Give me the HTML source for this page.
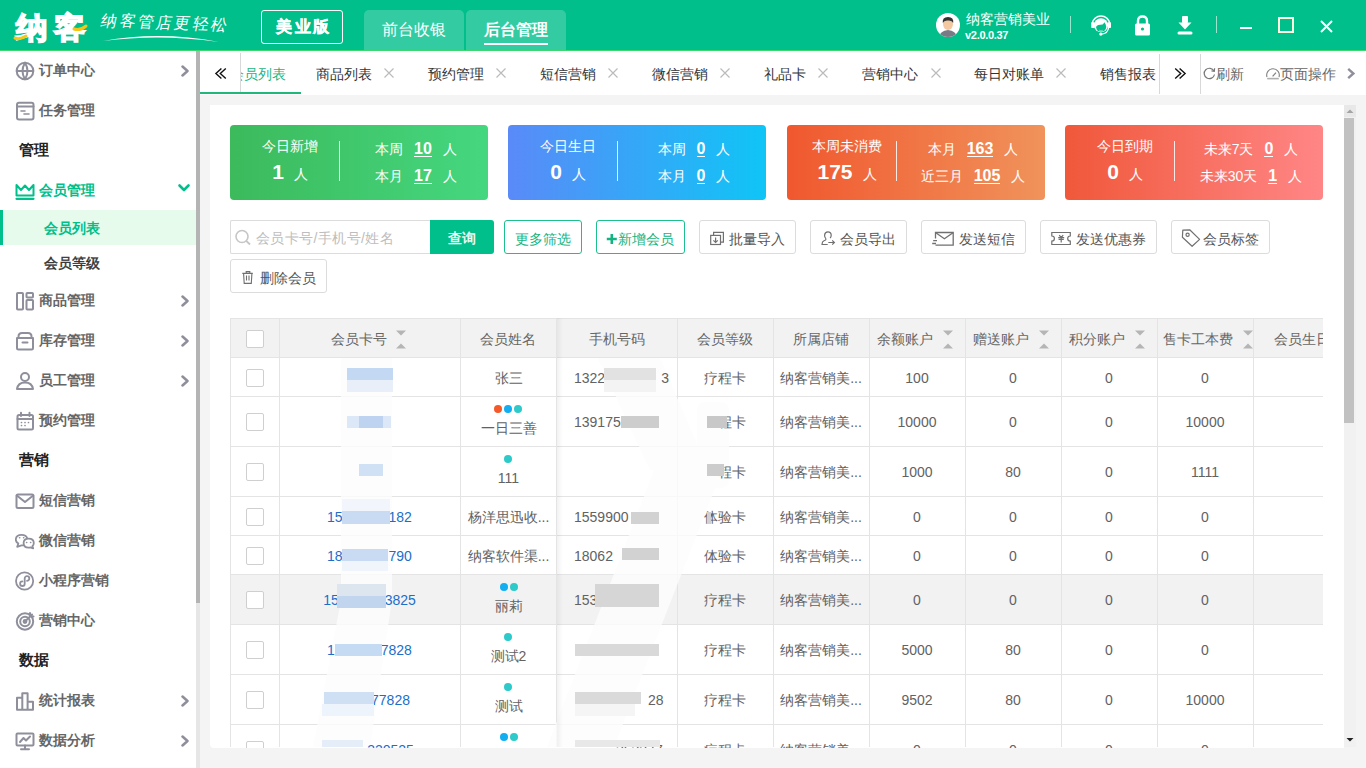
<!DOCTYPE html>
<html><head><meta charset="utf-8">
<style>
*{box-sizing:border-box;margin:0;padding:0}
html,body{width:1366px;height:768px;overflow:hidden;background:#f4f4f4;font-family:"Liberation Sans",sans-serif;position:relative}
.a{position:absolute}
#hdr{left:0;top:0;width:1366px;height:50px;background:#00bf8b}
#hdrline{left:0;top:50px;width:1366px;height:1px;background:#3fd870}
#side{left:0;top:51px;width:196px;height:717px;background:#fff}
#sbtrack{left:196px;top:51px;width:4px;height:717px;background:#e6e6e6}
#sbthumb{left:196px;top:51px;width:4px;height:552px;background:#b4b4b4}
.mi{position:absolute;left:39px;font-size:14px;line-height:20px;font-weight:bold;color:#666;white-space:nowrap}
.mh{position:absolute;left:19px;font-size:15px;line-height:20px;font-weight:bold;color:#222}
.ic{position:absolute;left:15px;width:20px;height:20px}
.chev{position:absolute;left:178px;width:12px;height:12px}
#tabs{left:200px;top:51px;width:1166px;height:44px;background:#fff}
.tab{position:absolute;top:64px;font-size:14px;line-height:20px;color:#333;white-space:nowrap}
.x{position:absolute;top:68px;width:10px;height:10px}
#panel{left:210px;top:105px;width:1134px;height:643px;background:#fff;overflow:hidden;border-radius:0 0 0 4px}
.card{position:absolute;top:125px;width:258px;height:75px;border-radius:4px;color:#fff}
.btn{position:absolute;top:220px;height:34px;border:1px solid #dcdcdc;border-radius:3px;background:#fff;font-size:14px;color:#555;white-space:nowrap}
.btn span{position:absolute;top:8px;line-height:20px}
</style></head>
<body>
<!-- HEADER -->
<div id="hdr" class="a"></div>
<div id="hdrline" class="a"></div>
<div class="a" style="left:16px;top:8px;font-size:32px;line-height:40px;font-weight:900;color:#fff;letter-spacing:6px;-webkit-text-stroke:1.6px #fff;transform:scaleY(0.95)">纳客</div>
<svg class="a" style="left:0;top:0" width="240" height="50">
<path d="M15 38 Q20 40 26 36" stroke="#f5c518" stroke-width="3" fill="none" stroke-linecap="round"/>
<path d="M74 29 Q80 31 86 26" stroke="#f5c518" stroke-width="3" fill="none" stroke-linecap="round"/>
<path d="M103 41 Q160 30.6 219 42 Q160 33.4 103 41Z" fill="#fff"/>
</svg>
<div class="a" style="left:101px;top:13px;font-size:16px;line-height:20px;color:#fff;font-family:'Liberation Serif',serif;letter-spacing:2.4px;transform:skewX(-10deg) rotate(2deg)">纳客管店更轻松</div>
<div class="a" style="left:261px;top:10px;width:82px;height:34px;border:1.5px solid #fff;border-radius:3px"></div>
<div class="a" style="left:276px;top:16px;font-size:16px;line-height:22px;font-weight:bold;color:#fff;letter-spacing:2.5px;-webkit-text-stroke:0.4px #fff">美业版</div>
<div class="a" style="left:364px;top:10px;width:100px;height:40px;background:rgba(255,255,255,0.2);border-radius:5px 5px 0 0"></div>
<div class="a" style="left:466px;top:10px;width:100px;height:40px;background:rgba(255,255,255,0.2);border-radius:5px 5px 0 0"></div>
<div class="a" style="left:382px;top:19px;font-size:16px;line-height:22px;color:#fff">前台收银</div>
<div class="a" style="left:484px;top:19px;font-size:16px;line-height:22px;color:#fff;font-weight:bold">后台管理</div>
<div class="a" style="left:484px;top:43px;width:64px;height:2px;background:#fff"></div>
<!-- avatar -->
<svg class="a" style="left:936px;top:13px" width="24" height="24" viewBox="0 0 24 24">
<circle cx="12" cy="12" r="12" fill="#fff"/>
<clipPath id="cav"><circle cx="12" cy="12" r="12"/></clipPath>
<g clip-path="url(#cav)">
<path d="M3 24 Q4 18 12 17 Q20 18 21 24Z" fill="#7a7a86"/>
<ellipse cx="12" cy="11" rx="5" ry="6" fill="#f3c7a0"/>
<path d="M6.8 10 Q6 4 12 4 Q18 4 17.2 10 Q16 7 12 7.5 Q8 7 6.8 10Z" fill="#333"/>
</g>
</svg>
<div class="a" style="left:966px;top:9px;font-size:14px;line-height:20px;color:#fff">纳客营销美业</div>
<div class="a" style="left:965px;top:28px;font-size:11px;line-height:14px;color:#fff;font-weight:bold;letter-spacing:-0.3px">v2.0.0.37</div>
<div class="a" style="left:1070px;top:16px;width:1px;height:17px;background:rgba(255,255,255,0.6)"></div>
<div class="a" style="left:1216px;top:16px;width:1px;height:17px;background:rgba(255,255,255,0.6)"></div>
<!-- headset -->
<svg class="a" style="left:1090px;top:13px" width="22" height="24" viewBox="0 0 22 24">
<path d="M2.2 10.5 A8.9 8.9 0 0 1 19.8 10.5" stroke="#fff" stroke-width="1.5" fill="none"/>
<rect x="1.2" y="9.2" width="3.6" height="5.8" rx="0.8" fill="#fff"/>
<rect x="17.6" y="9.2" width="3.4" height="5.8" rx="0.8" fill="#fff"/>
<circle cx="11" cy="12.3" r="7" fill="#fff"/>
<path d="M6 14 Q7.5 11.6 12.6 11.6 Q13.8 10.6 14.3 9.2 Q15.8 10.8 16.2 13.5 Q16.3 16.8 13.5 18.2 Q11 19 8.5 18.2 Q6.2 17 6 14Z" fill="#00bf8b"/>
<path d="M9 17.2 Q11 18 13 17.2" stroke="#7fdcc0" stroke-width="0.8" fill="none"/>
<path d="M18.6 14.5 Q18 20.5 11.5 21.2" stroke="#fff" stroke-width="1.3" fill="none"/>
<circle cx="10.8" cy="21.1" r="1.6" fill="#fff"/>
</svg>
<!-- lock -->
<svg class="a" style="left:1134px;top:15px" width="17" height="21" viewBox="0 0 17 21">
<path d="M4 9 V6 Q4 1.5 8.5 1.5 Q13 1.5 13 6 V9" stroke="#fff" stroke-width="2.4" fill="none"/>
<rect x="1" y="8.5" width="15" height="12" rx="1.5" fill="#fff"/>
<circle cx="8.5" cy="14" r="1.6" fill="#00bf8b"/>
</svg>
<!-- download -->
<svg class="a" style="left:1177px;top:15px" width="16" height="20" viewBox="0 0 16 20">
<rect x="5" y="1" width="6" height="7" rx="1" fill="#fff"/>
<path d="M1.5 7.5 H14.5 L8 14.5Z" fill="#fff"/>
<rect x="0.5" y="16.5" width="15" height="3" rx="1.5" fill="#fff"/>
</svg>
<div class="a" style="left:1240px;top:27px;width:12px;height:2px;background:#fff"></div>
<div class="a" style="left:1278px;top:17px;width:16px;height:16px;border:2px solid #fbffe0"></div>
<svg class="a" style="left:1320px;top:20px" width="13" height="13" viewBox="0 0 13 13">
<path d="M1 1 L12 12 M12 1 L1 12" stroke="#fff" stroke-width="2"/>
</svg>

<!-- SIDEBAR -->
<div id="side" class="a"></div>
<div class="a" style="left:0;top:210px;width:196px;height:35px;background:#e6fbec"></div>
<div class="a" style="left:0;top:210px;width:3px;height:35px;background:#00bf8b"></div>
<div class="mi" style="top:60px;left:39px;color:#666">订单中心</div>
<svg class="a" style="left:15px;top:61px" width="20" height="20" viewBox="0 0 20 20" fill="none" stroke="#8e8f9b" stroke-width="2" stroke-linecap="round" stroke-linejoin="round"><circle cx="10" cy="10" r="8.3"/><path d="M1.8 10 H18.2"/><path d="M10 1.7 Q5 10 10 18.3 Q15 10 10 1.7"/></svg>
<svg class="a" style="left:180px;top:65px" width="10" height="12" viewBox="0 0 10 12"><path d="M2.5 1.5 L7.5 6 L2.5 10.5" stroke="#8e8f9b" stroke-width="2.5" fill="none" stroke-linecap="round" stroke-linejoin="round"/></svg>
<div class="mi" style="top:100px;left:39px;color:#666">任务管理</div>
<svg class="a" style="left:15px;top:101px" width="20" height="20" viewBox="0 0 20 20" fill="none" stroke="#8e8f9b" stroke-width="2" stroke-linecap="round" stroke-linejoin="round"><rect x="2" y="1.8" width="16.5" height="16.8" rx="2"/><path d="M2 5.5 H18.5"/><path d="M6 10 H10 M9 13 H14" stroke-width="1.6"/></svg>
<div class="mh" style="top:140px">管理</div>
<div class="mi" style="top:180px;left:39px;color:#00bf8b">会员管理</div>
<svg class="a" style="left:15px;top:181px" width="20" height="20" viewBox="0 0 20 20" fill="none" stroke="#00bf8b" stroke-width="2" stroke-linecap="round" stroke-linejoin="round"><path d="M1.5 14.5 V4 L6 9 L10 4.5 L14 9 L18.5 4 V14.5Z" stroke-width="2"/><path d="M1.5 17.8 H18.5" stroke-width="2.2"/></svg>
<svg class="a" style="left:177px;top:183px" width="14" height="10" viewBox="0 0 14 10"><path d="M2.5 2.5 L7 7 L11.5 2.5" stroke="#00bf8b" stroke-width="2.6" fill="none" stroke-linecap="round" stroke-linejoin="round"/></svg>
<div class="mi" style="top:218px;left:44px;color:#00bf8b">会员列表</div>
<div class="mi" style="top:253px;left:44px;color:#333;font-weight:normal;-webkit-text-stroke:0.45px #333">会员等级</div>
<div class="mi" style="top:290px;left:39px;color:#666">商品管理</div>
<svg class="a" style="left:15px;top:291px" width="20" height="20" viewBox="0 0 20 20" fill="none" stroke="#8e8f9b" stroke-width="2" stroke-linecap="round" stroke-linejoin="round"><rect x="2" y="2" width="6" height="16.5" rx="0.8"/><rect x="11.5" y="2" width="6.5" height="4.5" rx="0.8"/><rect x="11.5" y="9" width="6.5" height="9.5" rx="0.8"/></svg>
<svg class="a" style="left:180px;top:295px" width="10" height="12" viewBox="0 0 10 12"><path d="M2.5 1.5 L7.5 6 L2.5 10.5" stroke="#8e8f9b" stroke-width="2.5" fill="none" stroke-linecap="round" stroke-linejoin="round"/></svg>
<div class="mi" style="top:330px;left:39px;color:#666">库存管理</div>
<svg class="a" style="left:15px;top:331px" width="20" height="20" viewBox="0 0 20 20" fill="none" stroke="#8e8f9b" stroke-width="2" stroke-linecap="round" stroke-linejoin="round"><path d="M3.5 5.5 Q3.5 2 7 2 H13 Q16.5 2 16.5 5.5"/><path d="M2 7 H18 V17 Q18 18.5 16.5 18.5 H3.5 Q2 18.5 2 17Z"/><path d="M7.5 11.5 H12.5"/></svg>
<svg class="a" style="left:180px;top:335px" width="10" height="12" viewBox="0 0 10 12"><path d="M2.5 1.5 L7.5 6 L2.5 10.5" stroke="#8e8f9b" stroke-width="2.5" fill="none" stroke-linecap="round" stroke-linejoin="round"/></svg>
<div class="mi" style="top:370px;left:39px;color:#666">员工管理</div>
<svg class="a" style="left:15px;top:371px" width="20" height="20" viewBox="0 0 20 20" fill="none" stroke="#8e8f9b" stroke-width="2" stroke-linecap="round" stroke-linejoin="round"><circle cx="10" cy="6" r="4"/><path d="M2 18 Q3 11.5 10 11.5 Q17 11.5 18 18Z"/></svg>
<svg class="a" style="left:180px;top:375px" width="10" height="12" viewBox="0 0 10 12"><path d="M2.5 1.5 L7.5 6 L2.5 10.5" stroke="#8e8f9b" stroke-width="2.5" fill="none" stroke-linecap="round" stroke-linejoin="round"/></svg>
<div class="mi" style="top:410px;left:39px;color:#666">预约管理</div>
<svg class="a" style="left:15px;top:411px" width="20" height="20" viewBox="0 0 20 20" fill="none" stroke="#8e8f9b" stroke-width="2" stroke-linecap="round" stroke-linejoin="round"><rect x="2.5" y="4" width="15.5" height="14.5" rx="1.5"/><path d="M2.5 8 H18 M6 1.8 V5 M14.5 1.8 V5"/><path d="M6.5 11.5h.01M10 11.5h.01M13.5 11.5h.01M6.5 14.5h.01M10 14.5h.01" stroke-width="1.7"/></svg>
<div class="mh" style="top:450px">营销</div>
<div class="mi" style="top:490px;left:39px;color:#666">短信营销</div>
<svg class="a" style="left:15px;top:491px" width="20" height="20" viewBox="0 0 20 20" fill="none" stroke="#8e8f9b" stroke-width="2" stroke-linecap="round" stroke-linejoin="round"><rect x="1.5" y="3.5" width="17" height="13.5" rx="1.5"/><path d="M1.8 4.5 L10 11 L18.2 4.5"/></svg>
<div class="mi" style="top:530px;left:39px;color:#666">微信营销</div>
<svg class="a" style="left:15px;top:531px" width="20" height="20" viewBox="0 0 20 20" fill="none" stroke="#8e8f9b" stroke-width="1.8" stroke-linecap="round" stroke-linejoin="round"><path d="M9 14.2 Q7.8 14.6 6.5 14.4 L2.2 15.8 L3.3 12.6 Q0.8 10.8 0.8 8.8 Q0.8 3.8 6.5 3.8 Q11.2 3.8 12.2 7.2"/><path d="M13.6 7.6 Q18.8 7.6 18.8 12 Q18.8 14 17.4 15.2 L18.2 17.4 L15.4 16.4 Q14.5 16.6 13.6 16.6 Q8.6 16.6 8.6 12 Q8.6 7.6 13.6 7.6Z" fill="#fff"/><path d="M4.5 6.8h.3M8.5 6.8h.3M11.5 11.5h.3M15.5 11.5h.3" stroke-width="1.4"/></svg>
<div class="mi" style="top:570px;left:39px;color:#666">小程序营销</div>
<svg class="a" style="left:15px;top:571px" width="20" height="20" viewBox="0 0 20 20" fill="none" stroke="#8e8f9b" stroke-width="1.8" stroke-linecap="round" stroke-linejoin="round"><circle cx="9.6" cy="10" r="8.6"/><path d="M7.4 10.4 A2.3 2.3 0 1 0 9.7 12.7 V7.5 A2.3 2.3 0 1 1 12 9.8"/></svg>
<div class="mi" style="top:610px;left:39px;color:#666">营销中心</div>
<svg class="a" style="left:15px;top:611px" width="20" height="20" viewBox="0 0 20 20" fill="none" stroke="#8e8f9b" stroke-width="2" stroke-linecap="round" stroke-linejoin="round"><circle cx="10" cy="10.5" r="8.2"/><circle cx="10" cy="10.5" r="4.8"/><circle cx="10" cy="10.5" r="1.4"/><path d="M10 10.5 L17 3.5 M15 2 V5.5 H18.5"/></svg>
<div class="mh" style="top:650px">数据</div>
<div class="mi" style="top:690px;left:39px;color:#666">统计报表</div>
<svg class="a" style="left:15px;top:691px" width="20" height="20" viewBox="0 0 20 20" fill="none" stroke="#8e8f9b" stroke-width="2" stroke-linecap="round" stroke-linejoin="round"><path d="M2 18.8 V6.8 H7.3 V18.8Z M7.3 18.8 V2.2 H12.6 V18.8Z M12.6 18.8 V10.8 H18 V18.8Z"/></svg>
<svg class="a" style="left:180px;top:695px" width="10" height="12" viewBox="0 0 10 12"><path d="M2.5 1.5 L7.5 6 L2.5 10.5" stroke="#8e8f9b" stroke-width="2.5" fill="none" stroke-linecap="round" stroke-linejoin="round"/></svg>
<div class="mi" style="top:730px;left:39px;color:#666">数据分析</div>
<svg class="a" style="left:15px;top:731px" width="20" height="20" viewBox="0 0 20 20" fill="none" stroke="#8e8f9b" stroke-width="2" stroke-linecap="round" stroke-linejoin="round"><rect x="1.5" y="2.5" width="17" height="12" rx="1"/><path d="M5 11 L8.5 7 L11 9.5 L15 5.5 M10 14.5 V18 M6 18.3 H14"/></svg>
<svg class="a" style="left:180px;top:735px" width="10" height="12" viewBox="0 0 10 12"><path d="M2.5 1.5 L7.5 6 L2.5 10.5" stroke="#8e8f9b" stroke-width="2.5" fill="none" stroke-linecap="round" stroke-linejoin="round"/></svg>
<div id="sbtrack" class="a"></div>
<div id="sbthumb" class="a"></div>

<!-- TABS -->
<div id="tabs" class="a"></div>
<div class="a" style="left:200px;top:92px;width:101px;height:2px;background:#1fb87a"></div>
<div class="tab" style="left:230px;color:#1db583">会员列表</div>
<div class="a" style="left:200px;top:53px;width:41px;height:39px;background:#fff;border-right:1px solid #d8d8d8"></div>
<svg class="a" style="left:200px;top:60px" width="40" height="30" viewBox="0 0 40 30"><path d="M21.4 8.4 L15.9 13.5 L21.4 18.4 M25.8 8.4 L20.3 13.5 L25.8 18.4" stroke="#111" stroke-width="1.4" fill="none"/></svg>
<div class="tab" style="left:316px">商品列表</div>
<svg class="a" style="left:384px;top:68px" width="10" height="10" viewBox="0 0 10 10"><path d="M0.5 0.5 L9.5 9.5 M9.5 0.5 L0.5 9.5" stroke="#bbb" stroke-width="1.2"/></svg>
<div class="tab" style="left:428px">预约管理</div>
<svg class="a" style="left:496px;top:68px" width="10" height="10" viewBox="0 0 10 10"><path d="M0.5 0.5 L9.5 9.5 M9.5 0.5 L0.5 9.5" stroke="#bbb" stroke-width="1.2"/></svg>
<div class="tab" style="left:540px">短信营销</div>
<svg class="a" style="left:608px;top:68px" width="10" height="10" viewBox="0 0 10 10"><path d="M0.5 0.5 L9.5 9.5 M9.5 0.5 L0.5 9.5" stroke="#bbb" stroke-width="1.2"/></svg>
<div class="tab" style="left:652px">微信营销</div>
<svg class="a" style="left:720px;top:68px" width="10" height="10" viewBox="0 0 10 10"><path d="M0.5 0.5 L9.5 9.5 M9.5 0.5 L0.5 9.5" stroke="#bbb" stroke-width="1.2"/></svg>
<div class="tab" style="left:764px">礼品卡</div>
<svg class="a" style="left:818px;top:68px" width="10" height="10" viewBox="0 0 10 10"><path d="M0.5 0.5 L9.5 9.5 M9.5 0.5 L0.5 9.5" stroke="#bbb" stroke-width="1.2"/></svg>
<div class="tab" style="left:862px">营销中心</div>
<svg class="a" style="left:931px;top:68px" width="10" height="10" viewBox="0 0 10 10"><path d="M0.5 0.5 L9.5 9.5 M9.5 0.5 L0.5 9.5" stroke="#bbb" stroke-width="1.2"/></svg>
<div class="tab" style="left:974px">每日对账单</div>
<svg class="a" style="left:1056px;top:68px" width="10" height="10" viewBox="0 0 10 10"><path d="M0.5 0.5 L9.5 9.5 M9.5 0.5 L0.5 9.5" stroke="#bbb" stroke-width="1.2"/></svg>
<div class="tab" style="left:1100px">销售报表</div>
<div class="a" style="left:1160px;top:51px;width:206px;height:43px;background:#fff"></div>
<div class="a" style="left:1159px;top:54px;width:1px;height:40px;background:#d8d8d8"></div>
<div class="a" style="left:1200px;top:54px;width:1px;height:40px;background:#d8d8d8"></div>
<svg class="a" style="left:1160px;top:60px" width="40" height="30" viewBox="0 0 40 30"><path d="M15.2 8.4 L20.7 13.5 L15.2 18.4 M19.6 8.4 L25.1 13.5 L19.6 18.4" stroke="#111" stroke-width="1.4" fill="none"/></svg>
<svg class="a" style="left:1203px;top:67px" width="13" height="13" viewBox="0 0 13 13"><path d="M11 4 A5.2 5.2 0 1 0 11.5 7.5" stroke="#777" stroke-width="1.2" fill="none"/><path d="M8.5 3.8 L11.3 4.3 L11.6 1.3" stroke="#777" stroke-width="1.2" fill="none"/></svg>
<div class="tab" style="left:1216px;color:#666">刷新</div>
<svg class="a" style="left:1266px;top:66px" width="14" height="15" viewBox="0 0 14 15"><path d="M1.03 11 A6.3 6.3 0 1 1 12.97 11" stroke="#808080" stroke-width="1.1" fill="none"/><path d="M1.2 12.6 H12.8" stroke="#b0b0b0" stroke-width="1.6"/><path d="M6.6 10.4 L10 6.6" stroke="#808080" stroke-width="1.2"/></svg>
<div class="tab" style="left:1280px;color:#666">页面操作</div>
<svg class="a" style="left:1346px;top:67px" width="10" height="13" viewBox="0 0 10 13"><path d="M2.2 1.8 L7.4 6.5 L2.2 11.2" stroke="#8e8f9b" stroke-width="2.4" fill="none"/></svg>

<!-- PANEL -->
<div id="panel" class="a"></div>
<div class="card" style="left:230px;background:linear-gradient(90deg,#3cba5c,#45d77f)"></div>
<div class="a" style="left:230px;top:136px;width:120px;text-align:center;font-size:14px;line-height:20px;color:#fff">今日新增</div>
<div class="a" style="left:230px;top:160px;width:120px;text-align:center;color:#fff;white-space:nowrap"><span style="font-size:21px;line-height:24px;font-weight:bold">1</span><span style="font-size:14px;margin-left:10px">人</span></div>
<div class="a" style="left:339px;top:141px;width:1px;height:40px;background:rgba(255,255,255,0.85)"></div>
<div class="a" style="left:342px;top:139px;width:148px;text-align:center;color:#fff;white-space:nowrap;font-size:14px;line-height:20px">本周<span style="display:inline-block;margin:0 11px 0 11px;font-weight:bold;font-size:16px;border-bottom:1px solid #fff;line-height:15px">10</span>人</div>
<div class="a" style="left:342px;top:166px;width:148px;text-align:center;color:#fff;white-space:nowrap;font-size:14px;line-height:20px">本月<span style="display:inline-block;margin:0 11px 0 11px;font-weight:bold;font-size:16px;border-bottom:1px solid #fff;line-height:15px">17</span>人</div>
<div class="card" style="left:508px;background:linear-gradient(90deg,#5a8af8,#0fc5f6)"></div>
<div class="a" style="left:508px;top:136px;width:120px;text-align:center;font-size:14px;line-height:20px;color:#fff">今日生日</div>
<div class="a" style="left:508px;top:160px;width:120px;text-align:center;color:#fff;white-space:nowrap"><span style="font-size:21px;line-height:24px;font-weight:bold">0</span><span style="font-size:14px;margin-left:10px">人</span></div>
<div class="a" style="left:617px;top:141px;width:1px;height:40px;background:rgba(255,255,255,0.85)"></div>
<div class="a" style="left:620px;top:139px;width:148px;text-align:center;color:#fff;white-space:nowrap;font-size:14px;line-height:20px">本周<span style="display:inline-block;margin:0 11px 0 11px;font-weight:bold;font-size:16px;border-bottom:1px solid #fff;line-height:15px">0</span>人</div>
<div class="a" style="left:620px;top:166px;width:148px;text-align:center;color:#fff;white-space:nowrap;font-size:14px;line-height:20px">本月<span style="display:inline-block;margin:0 11px 0 11px;font-weight:bold;font-size:16px;border-bottom:1px solid #fff;line-height:15px">0</span>人</div>
<div class="card" style="left:787px;background:linear-gradient(90deg,#f0582f,#f0935b)"></div>
<div class="a" style="left:787px;top:136px;width:120px;text-align:center;font-size:14px;line-height:20px;color:#fff">本周未消费</div>
<div class="a" style="left:787px;top:160px;width:120px;text-align:center;color:#fff;white-space:nowrap"><span style="font-size:21px;line-height:24px;font-weight:bold">175</span><span style="font-size:14px;margin-left:10px">人</span></div>
<div class="a" style="left:896px;top:141px;width:1px;height:40px;background:rgba(255,255,255,0.85)"></div>
<div class="a" style="left:899px;top:139px;width:148px;text-align:center;color:#fff;white-space:nowrap;font-size:14px;line-height:20px">本月<span style="display:inline-block;margin:0 11px 0 11px;font-weight:bold;font-size:16px;border-bottom:1px solid #fff;line-height:15px">163</span>人</div>
<div class="a" style="left:899px;top:166px;width:148px;text-align:center;color:#fff;white-space:nowrap;font-size:14px;line-height:20px">近三月<span style="display:inline-block;margin:0 11px 0 11px;font-weight:bold;font-size:16px;border-bottom:1px solid #fff;line-height:15px">105</span>人</div>
<div class="card" style="left:1065px;background:linear-gradient(90deg,#f0583a,#ff8686)"></div>
<div class="a" style="left:1065px;top:136px;width:120px;text-align:center;font-size:14px;line-height:20px;color:#fff">今日到期</div>
<div class="a" style="left:1065px;top:160px;width:120px;text-align:center;color:#fff;white-space:nowrap"><span style="font-size:21px;line-height:24px;font-weight:bold">0</span><span style="font-size:14px;margin-left:10px">人</span></div>
<div class="a" style="left:1174px;top:141px;width:1px;height:40px;background:rgba(255,255,255,0.85)"></div>
<div class="a" style="left:1177px;top:139px;width:148px;text-align:center;color:#fff;white-space:nowrap;font-size:14px;line-height:20px">未来7天<span style="display:inline-block;margin:0 11px 0 11px;font-weight:bold;font-size:16px;border-bottom:1px solid #fff;line-height:15px">0</span>人</div>
<div class="a" style="left:1177px;top:166px;width:148px;text-align:center;color:#fff;white-space:nowrap;font-size:14px;line-height:20px">未来30天<span style="display:inline-block;margin:0 11px 0 11px;font-weight:bold;font-size:16px;border-bottom:1px solid #fff;line-height:15px">1</span>人</div>
<div class="a" style="left:230px;top:220px;width:201px;height:34px;border:1px solid #dcdcdc;border-right:none;border-radius:2px 0 0 2px;background:#fff"></div>
<svg class="a" style="left:234px;top:229px" width="18" height="17" viewBox="0 0 18 17"><circle cx="8" cy="7.5" r="6" stroke="#c6c6c6" stroke-width="1.6" fill="none"/><path d="M12.2 11.8 L16 15.5" stroke="#c6c6c6" stroke-width="1.8"/></svg>
<div class="a" style="left:256px;top:228px;font-size:14px;line-height:20px;color:#bdbdbd;white-space:nowrap;letter-spacing:0.4px">会员卡号/手机号/姓名</div>
<div class="a" style="left:430px;top:220px;width:64px;height:34px;background:#00bf8b;border-radius:0 3px 3px 0"></div>
<div class="a" style="left:448px;top:228px;font-size:14px;line-height:20px;color:#fff;-webkit-text-stroke:0.35px #fff">查询</div>
<div class="btn" style="left:504px;width:78px;border-color:#1dbf8d"><span style="left:10px;color:#14b482">更多筛选</span></div>
<div class="btn" style="left:596px;width:89px;border-color:#1dbf8d"><span style="left:21px;color:#14b482">新增会员</span></div>
<svg class="a" style="left:606px;top:233px" width="12" height="12" viewBox="0 0 12 12"><path d="M5.8 1 V11 M0.8 6 H10.8" stroke="#14b482" stroke-width="2.6"/></svg>
<div class="btn" style="left:699px;width:97px"><span style="left:29px">批量导入</span></div>
<div class="btn" style="left:810px;width:97px"><span style="left:29px">会员导出</span></div>
<div class="btn" style="left:921px;width:105px"><span style="left:37px">发送短信</span></div>
<div class="btn" style="left:1040px;width:117px"><span style="left:35px">发送优惠券</span></div>
<div class="btn" style="left:1171px;width:99px"><span style="left:31px">会员标签</span></div>
<div class="btn" style="left:230px;top:259px;width:97px;height:34px"><span style="left:29px">删除会员</span></div>
<svg class="a" style="left:700px;top:220px" width="30" height="34" viewBox="700 220 30 34" fill="none" stroke="#707070" stroke-width="1.2">
<path d="M713.6 235 V232.3 H723.4 V242.2 H720.6"/><rect x="710.7" y="235.4" width="9.8" height="9.1"/><path d="M715.6 237.5 V242.3 M713.4 240.3 L715.6 242.5 L717.8 240.3"/></svg>
<svg class="a" style="left:815px;top:220px" width="25" height="34" viewBox="815 220 25 34" fill="none" stroke="#707070" stroke-width="1.2">
<path d="M826 238.8 Q824.4 237.5 824.6 235 Q825 231.8 827.9 231.8 Q831 231.8 831.2 235 Q831.3 236.6 830.2 238.2"/><path d="M826 238.8 Q826.2 240 824 240.8 Q822 241.6 822 244.5 H827.7"/><path d="M828.3 242.5 H834.3 M832.2 240.4 L834.4 242.5 L832.2 244.6"/></svg>
<svg class="a" style="left:928px;top:220px" width="30" height="34" viewBox="928 220 30 34" fill="none" stroke="#707070" stroke-width="1.3">
<path d="M935.5 238.5 V232.5 H953.2 V245.2 H935.5"/><path d="M935.8 232.8 L944.4 238.7 L953 232.8"/><path d="M933.2 240.6 H937 M932.2 243.5 H936"/></svg>
<svg class="a" style="left:1046px;top:220px" width="30" height="34" viewBox="1046 220 30 34" fill="none" stroke="#707070" stroke-width="1.2">
<path d="M1051.8 232.5 H1070.3 V236 A2.6 2.6 0 0 0 1070.3 241.2 V244.5 H1051.8 V241.2 A2.6 2.6 0 0 0 1051.8 236 Z"/><path d="M1059.2 235.2 L1061.2 237.5 L1063.2 235.2 M1058.2 237.6 H1064.2 M1058.6 239.4 H1063.8 M1061.2 237.5 V242.5"/></svg>
<svg class="a" style="left:1176px;top:220px" width="30" height="34" viewBox="1176 220 30 34" fill="none" stroke="#707070" stroke-width="1.2" stroke-linejoin="round">
<path d="M1182.8 230.2 L1189.7 229.8 L1199.6 239.4 L1192.1 246.3 L1182.4 237.3 Z"/><circle cx="1187.6" cy="234.8" r="1.6"/></svg>
<svg class="a" style="left:236px;top:262px" width="22" height="28" viewBox="236 262 22 28" fill="none" stroke="#707070" stroke-width="1.1">
<path d="M242.3 273.4 H252.8 M246.2 273.2 V271.6 H249.8 V273.2"/><path d="M243.6 273.6 L244.2 283.4 H251.3 L251.9 273.6"/><path d="M246.5 275.5 V280.5 M249 275.5 V280.5"/></svg>

<div id="tbl" class="a" style="left:230px;top:318px;width:1093px;height:430px;overflow:hidden">
<div class="a" style="left:0px;top:0px;width:1093px;height:39px;background:#f2f2f2"></div>
<div class="a" style="left:0px;top:256px;width:1093px;height:50px;background:#f2f2f2"></div>
<div class="a" style="left:0px;top:0px;width:1093px;height:1px;background:#e4e4e4"></div>
<div class="a" style="left:0px;top:39px;width:1093px;height:1px;background:#e4e4e4"></div>
<div class="a" style="left:0px;top:78px;width:1093px;height:1px;background:#e4e4e4"></div>
<div class="a" style="left:0px;top:128px;width:1093px;height:1px;background:#e4e4e4"></div>
<div class="a" style="left:0px;top:178px;width:1093px;height:1px;background:#e4e4e4"></div>
<div class="a" style="left:0px;top:217px;width:1093px;height:1px;background:#e4e4e4"></div>
<div class="a" style="left:0px;top:256px;width:1093px;height:1px;background:#e4e4e4"></div>
<div class="a" style="left:0px;top:306px;width:1093px;height:1px;background:#e4e4e4"></div>
<div class="a" style="left:0px;top:356px;width:1093px;height:1px;background:#e4e4e4"></div>
<div class="a" style="left:0px;top:406px;width:1093px;height:1px;background:#e4e4e4"></div>
<div class="a" style="left:0px;top:456px;width:1093px;height:1px;background:#e4e4e4"></div>
<div class="a" style="left:0px;top:0px;width:1px;height:429px;background:#e4e4e4"></div>
<div class="a" style="left:49px;top:0px;width:1px;height:429px;background:#e4e4e4"></div>
<div class="a" style="left:230px;top:0px;width:1px;height:429px;background:#e4e4e4"></div>
<div class="a" style="left:326px;top:0px;width:1px;height:429px;background:#e4e4e4"></div>
<div class="a" style="left:447px;top:0px;width:1px;height:429px;background:#e4e4e4"></div>
<div class="a" style="left:543px;top:0px;width:1px;height:429px;background:#e4e4e4"></div>
<div class="a" style="left:639px;top:0px;width:1px;height:429px;background:#e4e4e4"></div>
<div class="a" style="left:735px;top:0px;width:1px;height:429px;background:#e4e4e4"></div>
<div class="a" style="left:831px;top:0px;width:1px;height:429px;background:#e4e4e4"></div>
<div class="a" style="left:927px;top:0px;width:1px;height:429px;background:#e4e4e4"></div>
<div class="a" style="left:1023px;top:0px;width:1px;height:429px;background:#e4e4e4"></div>
<svg class="a" style="left:0;top:0" width="1093" height="429" viewBox="230 318 1093 429"><g fill="#fdfdfd" opacity="0.8"><path d="M341 358 H392 V600 L370 747 H313 L341 600Z"/><path d="M598 358 H660 L708 470 H650Z"/><path d="M660 455 H728 L614 747 H547Z"/><rect x="697" y="402" width="32" height="86" rx="8"/></g></svg>
<div class="a" style="left:16px;top:12px;width:18px;height:18px;background:#fff;border:1px solid #cfcfcf;border-radius:2px;box-sizing:border-box"></div>
<div class="a" style="left:101px;top:11px;font-size:14px;line-height:20px;color:#666;white-space:nowrap;">会员卡号</div>
<svg class="a" style="left:166px;top:11.5px" width="10" height="19" viewBox="0 0 10 19"><path d="M0 0.5 H10 L5 5.5Z M0 18.5 H10 L5 13.5Z" fill="#b5b5b5"/></svg>
<div class="a" style="left:188.0px;top:11px;width:180px;text-align:center;font-size:14px;line-height:20px;color:#666;white-space:nowrap;">会员姓名</div>
<div class="a" style="left:296.5px;top:11px;width:180px;text-align:center;font-size:14px;line-height:20px;color:#666;white-space:nowrap;">手机号码</div>
<div class="a" style="left:405.0px;top:11px;width:180px;text-align:center;font-size:14px;line-height:20px;color:#666;white-space:nowrap;">会员等级</div>
<div class="a" style="left:501.0px;top:11px;width:180px;text-align:center;font-size:14px;line-height:20px;color:#666;white-space:nowrap;">所属店铺</div>
<div class="a" style="left:646.5px;top:11px;font-size:14px;line-height:20px;color:#666;white-space:nowrap;">余额账户</div>
<svg class="a" style="left:713px;top:11.5px" width="10" height="19" viewBox="0 0 10 19"><path d="M0 0.5 H10 L5 5.5Z M0 18.5 H10 L5 13.5Z" fill="#b5b5b5"/></svg>
<div class="a" style="left:742.5px;top:11px;font-size:14px;line-height:20px;color:#666;white-space:nowrap;">赠送账户</div>
<svg class="a" style="left:809px;top:11.5px" width="10" height="19" viewBox="0 0 10 19"><path d="M0 0.5 H10 L5 5.5Z M0 18.5 H10 L5 13.5Z" fill="#b5b5b5"/></svg>
<div class="a" style="left:838.5px;top:11px;font-size:14px;line-height:20px;color:#666;white-space:nowrap;">积分账户</div>
<svg class="a" style="left:905px;top:11.5px" width="10" height="19" viewBox="0 0 10 19"><path d="M0 0.5 H10 L5 5.5Z M0 18.5 H10 L5 13.5Z" fill="#b5b5b5"/></svg>
<div class="a" style="left:933px;top:11px;font-size:14px;line-height:20px;color:#666;white-space:nowrap;">售卡工本费</div>
<svg class="a" style="left:1013px;top:11.5px" width="10" height="19" viewBox="0 0 10 19"><path d="M0 0.5 H10 L5 5.5Z M0 18.5 H10 L5 13.5Z" fill="#b5b5b5"/></svg>
<div class="a" style="left:1044px;top:11px;font-size:14px;line-height:20px;color:#666;white-space:nowrap;">会员生日</div>
<div class="a" style="left:16px;top:51px;width:18px;height:18px;background:#fff;border:1px solid #cfcfcf;border-radius:2px;box-sizing:border-box"></div>
<div class="a" style="left:188.5px;top:49.5px;width:180px;text-align:center;font-size:14px;line-height:20px;color:#626262;white-space:nowrap;">张三</div>
<div class="a" style="left:344px;top:49.5px;font-size:14px;line-height:20px;color:#626262;white-space:nowrap;">1322&#8195;&#8195;&#8195;&#8195;3</div>
<div class="a" style="left:450.0px;top:49.5px;width:90px;text-align:center;font-size:14px;line-height:20px;color:#626262;white-space:nowrap;">疗程卡</div>
<div class="a" style="left:543.0px;top:49.5px;width:96px;text-align:center;font-size:14px;line-height:20px;color:#626262;white-space:nowrap;">纳客营销美...</div>
<div class="a" style="left:642.0px;top:49.5px;width:90px;text-align:center;font-size:14px;line-height:20px;color:#626262;white-space:nowrap;">100</div>
<div class="a" style="left:738.0px;top:49.5px;width:90px;text-align:center;font-size:14px;line-height:20px;color:#626262;white-space:nowrap;">0</div>
<div class="a" style="left:834.0px;top:49.5px;width:90px;text-align:center;font-size:14px;line-height:20px;color:#626262;white-space:nowrap;">0</div>
<div class="a" style="left:930.0px;top:49.5px;width:90px;text-align:center;font-size:14px;line-height:20px;color:#626262;white-space:nowrap;">0</div>
<div class="a" style="left:16px;top:95px;width:18px;height:18px;background:#fff;border:1px solid #cfcfcf;border-radius:2px;box-sizing:border-box"></div>
<div class="a" style="left:264px;top:87px;width:8px;height:8px;background:#f5592a;border-radius:50%"></div>
<div class="a" style="left:274px;top:87px;width:8px;height:8px;background:#12aef0;border-radius:50%"></div>
<div class="a" style="left:284px;top:87px;width:8px;height:8px;background:#2ec9c9;border-radius:50%"></div>
<div class="a" style="left:188.5px;top:100px;width:180px;text-align:center;font-size:14px;line-height:20px;color:#626262;white-space:nowrap;">一日三善</div>
<div class="a" style="left:344px;top:94.0px;font-size:14px;line-height:20px;color:#626262;white-space:nowrap;">139175</div>
<div class="a" style="left:450.0px;top:94.0px;width:90px;text-align:center;font-size:14px;line-height:20px;color:#626262;white-space:nowrap;"><span style="opacity:0">疗</span>程卡</div>
<div class="a" style="left:543.0px;top:94.0px;width:96px;text-align:center;font-size:14px;line-height:20px;color:#626262;white-space:nowrap;">纳客营销美...</div>
<div class="a" style="left:642.0px;top:94.0px;width:90px;text-align:center;font-size:14px;line-height:20px;color:#626262;white-space:nowrap;">10000</div>
<div class="a" style="left:738.0px;top:94.0px;width:90px;text-align:center;font-size:14px;line-height:20px;color:#626262;white-space:nowrap;">0</div>
<div class="a" style="left:834.0px;top:94.0px;width:90px;text-align:center;font-size:14px;line-height:20px;color:#626262;white-space:nowrap;">0</div>
<div class="a" style="left:930.0px;top:94.0px;width:90px;text-align:center;font-size:14px;line-height:20px;color:#626262;white-space:nowrap;">10000</div>
<div class="a" style="left:16px;top:145px;width:18px;height:18px;background:#fff;border:1px solid #cfcfcf;border-radius:2px;box-sizing:border-box"></div>
<div class="a" style="left:274px;top:137px;width:8px;height:8px;background:#2ec9c9;border-radius:50%"></div>
<div class="a" style="left:188.5px;top:150px;width:180px;text-align:center;font-size:14px;line-height:20px;color:#626262;white-space:nowrap;">111</div>
<div class="a" style="left:450.0px;top:144.0px;width:90px;text-align:center;font-size:14px;line-height:20px;color:#626262;white-space:nowrap;"><span style="opacity:0">疗</span>程卡</div>
<div class="a" style="left:543.0px;top:144.0px;width:96px;text-align:center;font-size:14px;line-height:20px;color:#626262;white-space:nowrap;">纳客营销美...</div>
<div class="a" style="left:642.0px;top:144.0px;width:90px;text-align:center;font-size:14px;line-height:20px;color:#626262;white-space:nowrap;">1000</div>
<div class="a" style="left:738.0px;top:144.0px;width:90px;text-align:center;font-size:14px;line-height:20px;color:#626262;white-space:nowrap;">80</div>
<div class="a" style="left:834.0px;top:144.0px;width:90px;text-align:center;font-size:14px;line-height:20px;color:#626262;white-space:nowrap;">0</div>
<div class="a" style="left:930.0px;top:144.0px;width:90px;text-align:center;font-size:14px;line-height:20px;color:#626262;white-space:nowrap;">1111</div>
<div class="a" style="left:16px;top:190px;width:18px;height:18px;background:#fff;border:1px solid #cfcfcf;border-radius:2px;box-sizing:border-box"></div>
<div class="a" style="left:49.5px;top:188.5px;width:180px;text-align:center;font-size:14px;line-height:20px;color:#1a6fc9;white-space:nowrap;">15&#8195;&#8195;&#8195;&nbsp;182</div>
<div class="a" style="left:188.5px;top:188.5px;width:180px;text-align:center;font-size:14px;line-height:20px;color:#626262;white-space:nowrap;">杨洋思迅收...</div>
<div class="a" style="left:344px;top:188.5px;font-size:14px;line-height:20px;color:#626262;white-space:nowrap;">1559900</div>
<div class="a" style="left:450.0px;top:188.5px;width:90px;text-align:center;font-size:14px;line-height:20px;color:#626262;white-space:nowrap;">体验卡</div>
<div class="a" style="left:543.0px;top:188.5px;width:96px;text-align:center;font-size:14px;line-height:20px;color:#626262;white-space:nowrap;">纳客营销美...</div>
<div class="a" style="left:642.0px;top:188.5px;width:90px;text-align:center;font-size:14px;line-height:20px;color:#626262;white-space:nowrap;">0</div>
<div class="a" style="left:738.0px;top:188.5px;width:90px;text-align:center;font-size:14px;line-height:20px;color:#626262;white-space:nowrap;">0</div>
<div class="a" style="left:834.0px;top:188.5px;width:90px;text-align:center;font-size:14px;line-height:20px;color:#626262;white-space:nowrap;">0</div>
<div class="a" style="left:930.0px;top:188.5px;width:90px;text-align:center;font-size:14px;line-height:20px;color:#626262;white-space:nowrap;">0</div>
<div class="a" style="left:16px;top:229px;width:18px;height:18px;background:#fff;border:1px solid #cfcfcf;border-radius:2px;box-sizing:border-box"></div>
<div class="a" style="left:49.5px;top:227.5px;width:180px;text-align:center;font-size:14px;line-height:20px;color:#1a6fc9;white-space:nowrap;">18&#8195;&#8195;&#8195;&nbsp;790</div>
<div class="a" style="left:188.5px;top:227.5px;width:180px;text-align:center;font-size:14px;line-height:20px;color:#626262;white-space:nowrap;">纳客软件渠...</div>
<div class="a" style="left:344px;top:227.5px;font-size:14px;line-height:20px;color:#626262;white-space:nowrap;">18062</div>
<div class="a" style="left:450.0px;top:227.5px;width:90px;text-align:center;font-size:14px;line-height:20px;color:#626262;white-space:nowrap;">体验卡</div>
<div class="a" style="left:543.0px;top:227.5px;width:96px;text-align:center;font-size:14px;line-height:20px;color:#626262;white-space:nowrap;">纳客营销美...</div>
<div class="a" style="left:642.0px;top:227.5px;width:90px;text-align:center;font-size:14px;line-height:20px;color:#626262;white-space:nowrap;">0</div>
<div class="a" style="left:738.0px;top:227.5px;width:90px;text-align:center;font-size:14px;line-height:20px;color:#626262;white-space:nowrap;">0</div>
<div class="a" style="left:834.0px;top:227.5px;width:90px;text-align:center;font-size:14px;line-height:20px;color:#626262;white-space:nowrap;">0</div>
<div class="a" style="left:930.0px;top:227.5px;width:90px;text-align:center;font-size:14px;line-height:20px;color:#626262;white-space:nowrap;">0</div>
<div class="a" style="left:16px;top:273px;width:18px;height:18px;background:#fff;border:1px solid #cfcfcf;border-radius:2px;box-sizing:border-box"></div>
<div class="a" style="left:49.5px;top:272.0px;width:180px;text-align:center;font-size:14px;line-height:20px;color:#1a6fc9;white-space:nowrap;">15&#8195;&#8195;&#8195;&nbsp;3825</div>
<div class="a" style="left:270px;top:265px;width:8px;height:8px;background:#12aef0;border-radius:50%"></div>
<div class="a" style="left:280px;top:265px;width:8px;height:8px;background:#2ec9c9;border-radius:50%"></div>
<div class="a" style="left:188.5px;top:278px;width:180px;text-align:center;font-size:14px;line-height:20px;color:#626262;white-space:nowrap;">丽莉</div>
<div class="a" style="left:344px;top:272.0px;font-size:14px;line-height:20px;color:#626262;white-space:nowrap;">153</div>
<div class="a" style="left:450.0px;top:272.0px;width:90px;text-align:center;font-size:14px;line-height:20px;color:#626262;white-space:nowrap;">疗程卡</div>
<div class="a" style="left:543.0px;top:272.0px;width:96px;text-align:center;font-size:14px;line-height:20px;color:#626262;white-space:nowrap;">纳客营销美...</div>
<div class="a" style="left:642.0px;top:272.0px;width:90px;text-align:center;font-size:14px;line-height:20px;color:#626262;white-space:nowrap;">0</div>
<div class="a" style="left:738.0px;top:272.0px;width:90px;text-align:center;font-size:14px;line-height:20px;color:#626262;white-space:nowrap;">0</div>
<div class="a" style="left:834.0px;top:272.0px;width:90px;text-align:center;font-size:14px;line-height:20px;color:#626262;white-space:nowrap;">0</div>
<div class="a" style="left:930.0px;top:272.0px;width:90px;text-align:center;font-size:14px;line-height:20px;color:#626262;white-space:nowrap;">0</div>
<div class="a" style="left:16px;top:323px;width:18px;height:18px;background:#fff;border:1px solid #cfcfcf;border-radius:2px;box-sizing:border-box"></div>
<div class="a" style="left:49.5px;top:322.0px;width:180px;text-align:center;font-size:14px;line-height:20px;color:#1a6fc9;white-space:nowrap;">1&#8195;&#8195;&#8195;&nbsp;7828</div>
<div class="a" style="left:274px;top:315px;width:8px;height:8px;background:#2ec9c9;border-radius:50%"></div>
<div class="a" style="left:188.5px;top:328px;width:180px;text-align:center;font-size:14px;line-height:20px;color:#626262;white-space:nowrap;">测试2</div>
<div class="a" style="left:450.0px;top:322.0px;width:90px;text-align:center;font-size:14px;line-height:20px;color:#626262;white-space:nowrap;">疗程卡</div>
<div class="a" style="left:543.0px;top:322.0px;width:96px;text-align:center;font-size:14px;line-height:20px;color:#626262;white-space:nowrap;">纳客营销美...</div>
<div class="a" style="left:642.0px;top:322.0px;width:90px;text-align:center;font-size:14px;line-height:20px;color:#626262;white-space:nowrap;">5000</div>
<div class="a" style="left:738.0px;top:322.0px;width:90px;text-align:center;font-size:14px;line-height:20px;color:#626262;white-space:nowrap;">80</div>
<div class="a" style="left:834.0px;top:322.0px;width:90px;text-align:center;font-size:14px;line-height:20px;color:#626262;white-space:nowrap;">0</div>
<div class="a" style="left:930.0px;top:322.0px;width:90px;text-align:center;font-size:14px;line-height:20px;color:#626262;white-space:nowrap;">0</div>
<div class="a" style="left:16px;top:373px;width:18px;height:18px;background:#fff;border:1px solid #cfcfcf;border-radius:2px;box-sizing:border-box"></div>
<div class="a" style="left:49.5px;top:372.0px;width:180px;text-align:center;font-size:14px;line-height:20px;color:#1a6fc9;white-space:nowrap;">&#8195;&#8195;&#8195;77828</div>
<div class="a" style="left:274px;top:365px;width:8px;height:8px;background:#2ec9c9;border-radius:50%"></div>
<div class="a" style="left:188.5px;top:378px;width:180px;text-align:center;font-size:14px;line-height:20px;color:#626262;white-space:nowrap;">测试</div>
<div class="a" style="left:344px;top:372.0px;font-size:14px;line-height:20px;color:#626262;white-space:nowrap;">&#8195;&#8195;&#8195;&#8195;&#8195;&nbsp;28</div>
<div class="a" style="left:450.0px;top:372.0px;width:90px;text-align:center;font-size:14px;line-height:20px;color:#626262;white-space:nowrap;">疗程卡</div>
<div class="a" style="left:543.0px;top:372.0px;width:96px;text-align:center;font-size:14px;line-height:20px;color:#626262;white-space:nowrap;">纳客营销美...</div>
<div class="a" style="left:642.0px;top:372.0px;width:90px;text-align:center;font-size:14px;line-height:20px;color:#626262;white-space:nowrap;">9502</div>
<div class="a" style="left:738.0px;top:372.0px;width:90px;text-align:center;font-size:14px;line-height:20px;color:#626262;white-space:nowrap;">80</div>
<div class="a" style="left:834.0px;top:372.0px;width:90px;text-align:center;font-size:14px;line-height:20px;color:#626262;white-space:nowrap;">0</div>
<div class="a" style="left:930.0px;top:372.0px;width:90px;text-align:center;font-size:14px;line-height:20px;color:#626262;white-space:nowrap;">10000</div>
<div class="a" style="left:16px;top:423px;width:18px;height:18px;background:#fff;border:1px solid #cfcfcf;border-radius:2px;box-sizing:border-box"></div>
<div class="a" style="left:49.5px;top:422.0px;width:180px;text-align:center;font-size:14px;line-height:20px;color:#1a6fc9;white-space:nowrap;">&#8195;&#8195;&#8195;320525</div>
<div class="a" style="left:270px;top:415px;width:8px;height:8px;background:#12aef0;border-radius:50%"></div>
<div class="a" style="left:280px;top:415px;width:8px;height:8px;background:#2ec9c9;border-radius:50%"></div>
<div class="a" style="left:188.5px;top:428px;width:180px;text-align:center;font-size:14px;line-height:20px;color:#626262;white-space:nowrap;"></div>
<div class="a" style="left:344px;top:422.0px;font-size:14px;line-height:20px;color:#626262;white-space:nowrap;">&#8195;&#8195;&#8195;363277</div>
<div class="a" style="left:450.0px;top:422.0px;width:90px;text-align:center;font-size:14px;line-height:20px;color:#626262;white-space:nowrap;">疗程卡</div>
<div class="a" style="left:543.0px;top:422.0px;width:96px;text-align:center;font-size:14px;line-height:20px;color:#626262;white-space:nowrap;">纳客营销美...</div>
<div class="a" style="left:642.0px;top:422.0px;width:90px;text-align:center;font-size:14px;line-height:20px;color:#626262;white-space:nowrap;">0</div>
<div class="a" style="left:738.0px;top:422.0px;width:90px;text-align:center;font-size:14px;line-height:20px;color:#626262;white-space:nowrap;">0</div>
<div class="a" style="left:834.0px;top:422.0px;width:90px;text-align:center;font-size:14px;line-height:20px;color:#626262;white-space:nowrap;">0</div>
<div class="a" style="left:930.0px;top:422.0px;width:90px;text-align:center;font-size:14px;line-height:20px;color:#626262;white-space:nowrap;">0</div>
<div class="a" style="left:117px;top:50px;width:46px;height:12px;background:#c3d8f2"></div>
<div class="a" style="left:117px;top:62px;width:46px;height:12px;background:#e8eff9"></div>
<div class="a" style="left:117px;top:98px;width:44px;height:12px;background:#dce8f7"></div>
<div class="a" style="left:129px;top:98px;width:24px;height:12px;background:#bdd3f0"></div>
<div class="a" style="left:129px;top:146px;width:24px;height:12px;background:#d0e1f6"></div>
<div class="a" style="left:112px;top:193px;width:48px;height:13px;background:#c8dbf2"></div>
<div class="a" style="left:112px;top:181px;width:48px;height:12px;background:#f2f6fc"></div>
<div class="a" style="left:112px;top:231px;width:46px;height:13px;background:#c8dbf2"></div>
<div class="a" style="left:112px;top:243px;width:46px;height:10px;background:#f0f5fb"></div>
<div class="a" style="left:107px;top:266px;width:49px;height:12px;background:#dde5ee"></div>
<div class="a" style="left:107px;top:278px;width:49px;height:12px;background:#c2d5ee"></div>
<div class="a" style="left:105px;top:326px;width:47px;height:12px;background:#c5daf3"></div>
<div class="a" style="left:94px;top:374px;width:50px;height:12px;background:#cfe0f5"></div>
<div class="a" style="left:92px;top:386px;width:52px;height:12px;background:#eef4fb"></div>
<div class="a" style="left:92px;top:422px;width:41px;height:7px;background:#e5edf8"></div>
<div class="a" style="left:374px;top:50px;width:52px;height:12px;background:#e2e2e2"></div>
<div class="a" style="left:374px;top:62px;width:52px;height:12px;background:#f3f3f3"></div>
<div class="a" style="left:391px;top:98px;width:38px;height:12px;background:#cdcdcd"></div>
<div class="a" style="left:401px;top:194px;width:28px;height:12px;background:#d2d2d2"></div>
<div class="a" style="left:392px;top:230px;width:37px;height:12px;background:#d2d2d2"></div>
<div class="a" style="left:365px;top:266px;width:64px;height:23px;background:#d6d6d6"></div>
<div class="a" style="left:345px;top:326px;width:84px;height:12px;background:#d9d9d9"></div>
<div class="a" style="left:345px;top:374px;width:66px;height:12px;background:#dadada"></div>
<div class="a" style="left:345px;top:386px;width:60px;height:12px;background:#f5f5f5"></div>
<div class="a" style="left:345px;top:422px;width:85px;height:7px;background:#e8e8e8"></div>
<div class="a" style="left:477px;top:98px;width:20px;height:12px;background:#c8c8c8"></div>
<div class="a" style="left:477px;top:146px;width:17px;height:12px;background:#cccccc"></div>
<div class="a" style="left:477px;top:194px;width:4px;height:12px;background:#d0d0d0"></div>
</div>
<div class="a" style="left:557px;top:318px;width:6px;height:429px;background:linear-gradient(90deg,rgba(0,0,0,0.05),rgba(0,0,0,0))"></div>
<div class="a" style="left:1344px;top:105px;width:12px;height:642px;background:#f1f1f1"></div>
<div class="a" style="left:1344px;top:105px;width:12px;height:12px;background:#e8e8e8"></div>
<svg class="a" style="left:1344px;top:105px" width="12" height="12" viewBox="0 0 12 12"><path d="M2.5 8 H9.5 L6 4.5Z" fill="#a3a3a3"/></svg>
<div class="a" style="left:1344px;top:118px;width:10px;height:305px;background:#c1c1c1"></div>
<svg class="a" style="left:1344px;top:734px" width="12" height="12" viewBox="0 0 12 12"><path d="M2.5 4 H9.5 L6 7.5Z" fill="#222"/></svg>
</body></html>
